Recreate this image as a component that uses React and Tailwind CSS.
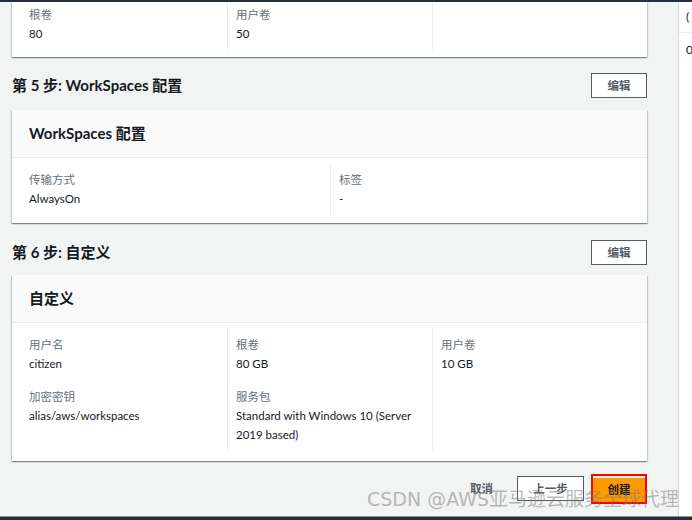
import React from 'react';

const font = { fontFamily: 'Lato, "Noto Sans CJK SC", sans-serif' };

const cardShadow =
  'shadow-[0_1px_1px_0_rgba(0,28,36,0.3),1px_1px_1px_0_rgba(0,28,36,0.15),-1px_1px_1px_0_rgba(0,28,36,0.15)]';

const Field = ({ label, value }) => (
  <div>
    <div className="text-[11.5px] leading-[19px] text-[#687078]">{label}</div>
    <div className="text-[11.5px] leading-[19px] text-[#16191f]">{value}</div>
  </div>
);

const Col = ({ first, children, className = '' }) => (
  <div className={`${first ? 'pr-[10px]' : 'border-l border-[#eaeded] pl-[8px] pr-[10px]'} ${className}`}>
    {children}
  </div>
);

const EditButton = ({ label = '编辑' }) => (
  <button className="h-[25px] w-[56px] border border-[#545b64] bg-white text-[11.5px] font-bold text-[#545b64]">
    {label}
  </button>
);

const SectionHeader = ({ title }) => (
  <div className="flex h-[25px] items-center justify-between">
    <h2 className="text-[15px] font-bold text-[#16191f]">{title}</h2>
    <EditButton />
  </div>
);

const CardHeader = ({ title }) => (
  <div className="flex h-[48px] items-center border-b border-[#eaeded] bg-[#fafafa] px-[17px]">
    <h3 className="text-[15px] font-bold text-[#16191f]">{title}</h3>
  </div>
);

export default function App() {
  return (
    <div style={font} className="relative flex h-[520px] w-[692px] flex-col overflow-hidden bg-[#f2f3f3]">
      <div className="h-[2px] bg-[#232f3e]" />

      <div className="flex flex-1 overflow-hidden">
        {/* main column */}
        <div className="w-[678px] shrink-0 pl-[12px] pr-[31px]">
          {/* step 4 card (scrolled, top cut off) */}
          <div className={`bg-white ${cardShadow} pl-[17px] pr-[16px] pb-[7px]`}>
            <div className="grid grid-cols-[198px_205px_1fr]">
              <Col first className="pt-[3px] pb-[7px]">
                <Field label="根卷" value="80" />
              </Col>
              <Col className="pt-[3px] pb-[7px]">
                <Field label="用户卷" value="50" />
              </Col>
              <Col className="pt-[3px] pb-[7px]" />
            </div>
          </div>

          {/* step 5 */}
          <div className="mt-[16px]">
            <SectionHeader title="第 5 步: WorkSpaces 配置" />
            <div className={`mt-[12px] bg-white ${cardShadow}`}>
              <CardHeader title="WorkSpaces 配置" />
              <div className="pl-[17px] pr-[16px] pt-[6px] pb-[8px]">
                <div className="grid grid-cols-[301px_1fr]">
                  <Col first className="pt-[6px] pb-[7px]">
                    <Field label="传输方式" value="AlwaysOn" />
                  </Col>
                  <Col className="pt-[6px] pb-[7px]">
                    <Field label="标签" value="-" />
                  </Col>
                </div>
              </div>
            </div>
          </div>

          {/* step 6 */}
          <div className="mt-[17px]">
            <SectionHeader title="第 6 步: 自定义" />
            <div className={`mt-[10px] bg-white ${cardShadow}`}>
              <CardHeader title="自定义" />
              <div className="pl-[17px] pr-[16px] pt-[5px] pb-[9px]">
                <div className="grid grid-cols-[198px_205px_1fr]">
                  <Col first className="flex flex-col gap-[14px] pt-[7px] pb-[8px]">
                    <Field label="用户名" value="citizen" />
                    <Field label="加密密钥" value="alias/aws/workspaces" />
                  </Col>
                  <Col className="flex flex-col gap-[14px] pt-[7px] pb-[8px]">
                    <Field label="根卷" value="80 GB" />
                    <Field label="服务包" value="Standard with Windows 10 (Server 2019 based)" />
                  </Col>
                  <Col className="flex flex-col gap-[14px] pt-[7px] pb-[8px]">
                    <Field label="用户卷" value="10 GB" />
                  </Col>
                </div>
              </div>
            </div>
          </div>

          {/* footer actions */}
          <div className="mt-[13px] flex items-center justify-end gap-[7px]">
            <button className="mr-[17px] text-[11.5px] font-bold text-[#545b64]">取消</button>
            <button className="h-[25px] w-[67px] border border-[#545b64] bg-white text-[11.5px] font-bold text-[#545b64]">
              上一步
            </button>
            <div className="border-2 border-[#ff0000]">
              <button className="h-[24px] w-[52px] bg-[#ff9900] text-[11.5px] font-bold text-[#16191f]">创建</button>
            </div>
          </div>
        </div>

        {/* right side panel */}
        <div className="flex-1 border-l border-[#d5dbdb] bg-white">
          <div className="flex h-[31px] items-center border-b border-[#eaeded] pl-[7px] text-[12px] text-[#16191f]">(</div>
          <div className="pl-[7px] pt-[8px] text-[12px] text-[#16191f]">0</div>
        </div>
      </div>

      <div className="h-[1px] bg-[#879596]" />
      <div className="h-[3px] bg-[#232f3e]" />

      {/* watermark */}
      <div
        className="pointer-events-none absolute left-[367px] top-[487px] whitespace-nowrap text-[19px] leading-[24px] text-[rgba(120,120,120,0.5)]"
        style={{ fontFamily: '"DejaVu Sans", "Noto Sans CJK SC", sans-serif' }}
      >
        CSDN @AWS亚马逊云服务全球代理
      </div>
    </div>
  );
}
